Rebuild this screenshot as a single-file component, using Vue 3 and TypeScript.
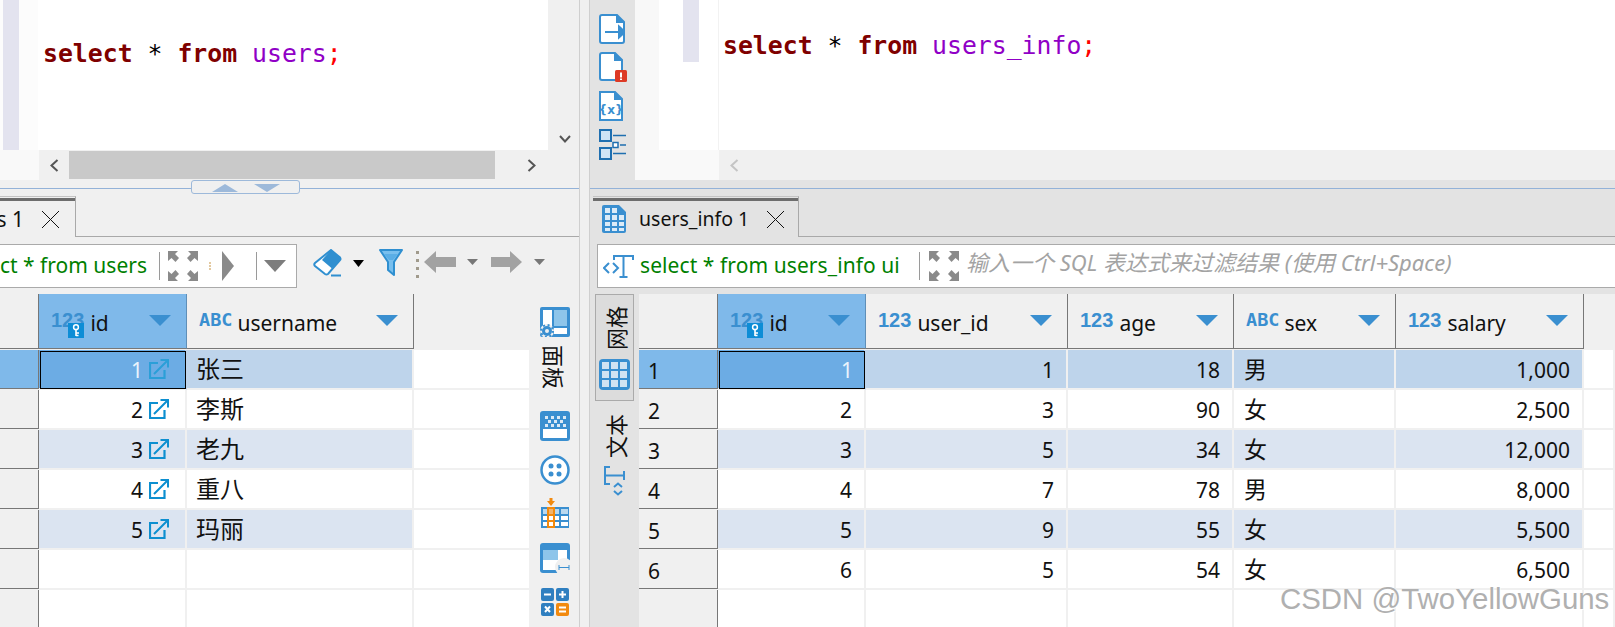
<script setup lang="ts">
interface Col { name: string; type: string; key?: boolean; sel?: boolean }
const leftCols: Col[] = [
  { name: 'id', type: '123', key: true, sel: true },
  { name: 'username', type: 'ABC' },
]
const rightCols: Col[] = [
  { name: 'id', type: '123', key: true, sel: true },
  { name: 'user_id', type: '123' },
  { name: 'age', type: '123' },
  { name: 'sex', type: 'ABC' },
  { name: 'salary', type: '123' },
]
const leftRows = [
  ['1', '张三'], ['2', '李斯'], ['3', '老九'], ['4', '重八'], ['5', '玛丽'], ['', ''], ['', ''],
]
const rightRows = [
  ['1', '1', '18', '男', '1,000'],
  ['2', '3', '90', '女', '2,500'],
  ['3', '5', '34', '女', '12,000'],
  ['4', '7', '78', '男', '8,000'],
  ['5', '9', '55', '女', '5,500'],
  ['6', '5', '54', '女', '6,500'],
  ['', '', '', '', ''],
]
const rowClass = (i: number) => (i === 0 ? 'r-sel' : i % 2 === 0 && i < 6 ? 'r-alt' : '')
</script>

<template>
  <div class="app">
    <svg class="defs" width="0" height="0">
      <symbol id="tri" viewBox="0 0 22 11"><path d="M0 0H22L11 11Z" fill="#3a8fd0" /></symbol>
      <symbol id="x" viewBox="0 0 17 17"><path d="M0 0L17 17M17 0L0 17" stroke="#111" stroke-width="1" fill="none" /></symbol>
      <symbol id="expand" viewBox="0 0 30 30">
        <g fill="#8a8a8a">
          <path d="M0 0H10L7 3L11 7L7.500 11L3.500 7L0 10Z" />
          <path d="M30 0H20L23 3L19 7L22.500 11L26.500 7L30 10Z" />
          <path d="M0 30H10L7 27L11 23L7.500 19L3.500 23L0 20Z" />
          <path d="M30 30H20L23 27L19 23L22.500 19L26.500 23L30 20Z" />
        </g>
      </symbol>
      <symbol id="key" viewBox="0 0 16 15">
        <rect width="16" height="15" fill="#0d8dd6" />
        <circle cx="8" cy="4.200" r="2.400" fill="none" stroke="#fff" stroke-width="1.500" />
        <path d="M8 6.500V13M8 10H11M8 12.500H10.500" stroke="#fff" stroke-width="1.600" fill="none" />
      </symbol>
      <symbol id="link" viewBox="0 0 20 20">
        <path d="M9 4H1V19H15.500V11" fill="none" stroke="currentColor" stroke-width="2.200" />
        <path d="M5 15L18 2M11.500 1H19V8.500" fill="none" stroke="currentColor" stroke-width="2" />
      </symbol>
    </svg>

    <!-- left pane -->
    <section class="pane left">
      <div class="editor">
        <div class="ed-top">
          <div class="gutter"><div class="ruler"></div></div>
          <div class="code code-l">
            <b class="kw">select</b> <span>*</span> <b class="kw">from</b> <span class="id">users</span><span class="semi">;</span>
          </div>
          <div class="vscroll">
            <svg width="12" height="8" viewBox="0 0 12 8"><path d="M1 1L6 6.500L11 1" fill="none" stroke="#555" stroke-width="2" /></svg>
          </div>
        </div>
        <div class="ed-bottom">
          <div class="corner corner-l"></div>
          <div class="hscroll">
            <div class="h-arrow"><svg width="9" height="13" viewBox="0 0 9 13"><path d="M7.500 1L1.500 6.500L7.500 12" fill="none" stroke="#555" stroke-width="2" /></svg></div>
            <div class="thumb"></div>
            <div class="h-end"><svg width="9" height="13" viewBox="0 0 9 13"><path d="M1.500 1L7.500 6.500L1.500 12" fill="none" stroke="#555" stroke-width="2" /></svg></div>
          </div>
        </div>
      </div>
      <div class="split">
        <div class="split-line"></div>
        <div class="sash">
          <svg width="26" height="9" viewBox="0 0 26 9"><path d="M13 0L26 8H0Z" fill="#9db9da" /></svg>
          <svg width="26" height="9" viewBox="0 0 26 9"><path d="M13 8L26 0H0Z" fill="#9db9da" /></svg>
        </div>
      </div>
      <div class="tabbar">
        <div class="tab tab-l">
          <div class="tab-bar"></div>
          <div class="tab-body">
            <div class="clip clip-tab"><span>users 1</span></div>
            <svg class="tab-x" width="17" height="17"><use href="#x" /></svg>
          </div>
        </div>
        <div class="tab-fill"></div>
      </div>
      <div class="filter-row">
        <div class="filter filter-l">
          <div class="clip clip-filter"><span class="sql">select * from users</span></div>
          <i class="vline vl-1"></i>
          <svg class="exp" width="30" height="30"><use href="#expand" /></svg>
          <span class="dots"></span>
          <svg width="12" height="30" viewBox="0 0 12 30"><path d="M0 0L12 15L0 30Z" fill="#8a8a8a" /></svg>
          <i class="vline vl-2"></i>
          <svg class="drop" width="22" height="12" viewBox="0 0 22 12"><path d="M0 0H22L11 12Z" fill="#7d7d7d" /></svg>
        </div>
        <div class="tools">
          <svg width="29" height="28" viewBox="0 0 29 28">
            <path d="M18 1L27 8.500Q28 10 27 11L15 25Q13.500 26 12 25L2 17Q0.500 15.500 2 14Z" fill="#fff" stroke="#2f8fd0" stroke-width="2" />
            <path d="M18 1L27 8.500Q28 10 27 11L19 19.500L9 11Z" fill="#2f8fd0" />
            <path d="M18 26.500H28" stroke="#2f8fd0" stroke-width="2" />
          </svg>
          <svg class="t1" width="11" height="7" viewBox="0 0 11 7"><path d="M0 0H11L5.500 7Z" fill="#000" /></svg>
          <svg class="t2" width="24" height="28" viewBox="0 0 24 28">
            <path d="M1 1H23L15 13V26L9 21V13Z" fill="#78bfee" stroke="#2f8fd0" stroke-width="2" stroke-linejoin="round" />
            <path d="M5 5H19L14 11H10Z" fill="#5aaee6" />
          </svg>
          <div class="grip"><i></i><i></i><i></i><i></i></div>
          <svg class="t3" width="32" height="22" viewBox="0 0 32 22"><path d="M0 11L12 0V6H32V16H12V22Z" fill="#a2a2a2" /></svg>
          <svg class="t4" width="11" height="6" viewBox="0 0 11 6"><path d="M0 0H11L5.500 6Z" fill="#777" /></svg>
          <svg class="t5" width="31" height="22" viewBox="0 0 31 22"><path d="M31 11L19 0V6H0V16H19V22Z" fill="#a2a2a2" /></svg>
          <svg class="t6" width="11" height="6" viewBox="0 0 11 6"><path d="M0 0H11L5.500 6Z" fill="#777" /></svg>
        </div>
      </div>
      <div class="data">
        <div class="grid grid-l">
          <div class="rh head"></div>
          <div v-for="c in leftCols" :key="c.name" class="hc" :class="{ 'hc-sel': c.sel }">
            <span class="type" :class="{ abc: c.type === 'ABC' }">{{ c.type }}</span>
            <svg v-if="c.key" class="keyb" width="16" height="15"><use href="#key" /></svg>
            <span class="hname">{{ c.name }}</span>
            <svg class="sort" width="22" height="11"><use href="#tri" /></svg>
          </div>
          <div class="hfill"></div>
          <template v-for="(r, i) in leftRows" :key="i">
            <div class="rh" :class="{ 'rh-sel': i === 0 }"></div>
            <div class="cell num" :class="[rowClass(i), { 'cur cur-l': i === 0 }]">
              <template v-if="r[0]">
                <span>{{ r[0] }}</span>
                <svg class="lnk" width="20" height="20"><use href="#link" /></svg>
              </template>
            </div>
            <div class="cell cjk" :class="rowClass(i)">{{ r[1] }}</div>
            <div class="cell"></div>
          </template>
        </div>
        <div class="sidebar">
          <svg width="30" height="30" viewBox="0 0 30 30">
            <path d="M2 0H28Q30 0 30 2V28Q30 30 28 30H2Q0 30 0 28V2Q0 0 2 0Z" fill="#3a8fd0" />
            <rect x="3" y="3" width="9" height="24" fill="#fff" />
            <rect x="14" y="3" width="13" height="16" fill="#8ec5ea" />
            <rect x="14" y="21" width="13" height="6" fill="#fff" />
            <circle cx="7" cy="24" r="7" fill="#f0f0f0" />
            <circle cx="7" cy="24" r="3.500" fill="none" stroke="#3a8fd0" stroke-width="3" />
            <circle cx="7" cy="24" r="6" fill="none" stroke="#3a8fd0" stroke-width="2" stroke-dasharray="2 2.700" />
          </svg>
          <span class="vtext vt-panel">面板</span>
          <svg class="s2" width="30" height="30" viewBox="0 0 30 30">
            <rect width="30" height="30" rx="3" fill="#3a8fd0" />
            <rect x="3" y="3" width="24" height="24" fill="#fff" />
            <rect x="3" y="3" width="24" height="15" fill="#3a8fd0" />
            <g fill="#dbe9f5">
              <rect x="5" y="5" width="3" height="3" /><rect x="11" y="5" width="3" height="3" /><rect x="17" y="5" width="3" height="3" /><rect x="23" y="5" width="3" height="3" />
              <rect x="8" y="9" width="3" height="3" /><rect x="14" y="9" width="3" height="3" /><rect x="20" y="9" width="3" height="3" />
              <rect x="5" y="13" width="3" height="3" /><rect x="11" y="13" width="3" height="3" /><rect x="17" y="13" width="3" height="3" /><rect x="23" y="13" width="3" height="3" />
            </g>
          </svg>
          <svg class="s3" width="30" height="30" viewBox="0 0 30 30">
            <circle cx="15" cy="15" r="13.500" fill="#fff" stroke="#3a8fd0" stroke-width="2.500" />
            <circle cx="11" cy="11" r="2.500" fill="#3a8fd0" /><circle cx="19" cy="11" r="2.500" fill="#3a8fd0" />
            <circle cx="11" cy="19" r="2.500" fill="#3a8fd0" /><circle cx="19" cy="19" r="2.500" fill="#3a8fd0" />
          </svg>
          <svg class="s4" width="30" height="31" viewBox="0 0 30 31">
            <rect x="1" y="9" width="28" height="21" fill="#3a8fd0" />
            <g fill="#fff">
              <rect x="3" y="11" width="7" height="5" fill="#b9d8ef" /><rect x="12" y="11" width="7" height="5" fill="#b9d8ef" /><rect x="21" y="11" width="7" height="5" fill="#b9d8ef" />
              <rect x="3" y="18" width="7" height="4" /><rect x="12" y="18" width="7" height="4" /><rect x="21" y="18" width="7" height="4" />
              <rect x="3" y="24" width="7" height="4" /><rect x="12" y="24" width="7" height="4" /><rect x="21" y="24" width="7" height="4" />
            </g>
            <rect x="7" y="9" width="8" height="21" fill="#f28a0f" />
            <rect x="9" y="11" width="4" height="5" fill="#f4b36a" /><rect x="9" y="18" width="4" height="4" fill="#fff" /><rect x="9" y="24" width="4" height="4" fill="#fff" />
            <path d="M9.500 0H12.500V3H15L11 8L7 3H9.500Z" fill="#f28a0f" />
          </svg>
          <svg class="s5" width="30" height="30" viewBox="0 0 30 30">
            <rect width="30" height="30" rx="3" fill="#3a8fd0" />
            <rect x="3" y="7" width="24" height="20" fill="#fff" />
            <rect x="3" y="7" width="15" height="10" fill="#8ec5ea" />
            <circle cx="24" cy="24" r="9" fill="#f0f0f0" />
            <path d="M19 22V27M19 24.500H29M29 22V27" stroke="#3a8fd0" stroke-width="1" fill="none" />
          </svg>
          <svg class="s6" width="28" height="28" viewBox="0 0 28 28">
            <rect width="13" height="13" rx="2" fill="#2f7fc0" />
            <rect x="15" width="13" height="13" rx="2" fill="#2f7fc0" />
            <rect y="15" width="13" height="13" rx="2" fill="#2f7fc0" />
            <rect x="15" y="15" width="13" height="13" rx="2" fill="#f28a0f" />
            <path d="M3 6.500H10M18 6.500H25M21.500 3V10M4 18.500L9 24M9 18.500L4 24M18 19.500H25M18 23.500H25" stroke="#fff" stroke-width="2" fill="none" />
          </svg>
        </div>
      </div>
    </section>

    <div class="gap"></div>

    <!-- right pane -->
    <section class="pane right">
      <div class="editor">
        <div class="ed-tools">
          <svg width="26" height="30" viewBox="0 0 26 30">
            <path d="M18 1H3Q1 1 1 3V27Q1 29 3 29H23Q25 29 25 27V8Z" fill="#fff" stroke="#3a8fd0" stroke-width="2" />
            <path d="M18 1V8H25" fill="#3a8fd0" stroke="#3a8fd0" stroke-width="2" />
            <path d="M6 18H20M20 12.500L26 18L20 23.500Z" stroke="#3a8fd0" fill="#3a8fd0" stroke-width="2" />
          </svg>
          <svg width="29" height="31" viewBox="0 0 29 31">
            <path d="M16 1H3Q1 1 1 3V26Q1 28 3 28H23V8Z" fill="#fff" stroke="#3a8fd0" stroke-width="2" />
            <path d="M16 1V8H23" fill="#3a8fd0" stroke="#3a8fd0" stroke-width="2" />
            <rect x="16" y="18" width="12" height="12" rx="1.500" fill="#dd3a26" />
            <path d="M22 20.500V25.500M22 26.500V28" stroke="#fff" stroke-width="2" />
          </svg>
          <svg width="24" height="30" viewBox="0 0 24 30">
            <path d="M16 1H1V29H23V8Z" fill="#fff" stroke="#3a8fd0" stroke-width="2" />
            <path d="M16 1V8H23" fill="#3a8fd0" stroke="#3a8fd0" stroke-width="2" />
            <text x="12" y="23" text-anchor="middle" class="svg-x">{x}</text>
          </svg>
          <svg width="27" height="31" viewBox="0 0 27 31">
            <rect x="1" y="1" width="11" height="11" fill="#cfe4f6" stroke="#1f6fb0" stroke-width="2" />
            <rect x="14" y="13.500" width="5" height="5" fill="#fff" stroke="#1f6fb0" stroke-width="1.500" />
            <rect x="1" y="19" width="11" height="11" fill="#cfe4f6" stroke="#1f6fb0" stroke-width="2" />
            <path d="M14 6.500H27M21 16H27M14 24.500H27" stroke="#1f6fb0" stroke-width="1.500" />
          </svg>
        </div>
        <div class="ed-main">
          <div class="ed-top ed-top-r">
            <div class="gutter-r"><div class="ruler ruler-r"></div></div>
            <div class="code code-r">
              <b class="kw">select</b> <span>*</span> <b class="kw">from</b> <span class="id">users_info</span><span class="semi">;</span>
            </div>
          </div>
          <div class="ed-bottom">
            <div class="corner corner-r"></div>
            <div class="hscroll">
              <div class="h-arrow h-arrow-r"><svg width="9" height="13" viewBox="0 0 9 13"><path d="M7.500 1L1.500 6.500L7.500 12" fill="none" stroke="#c4c4c4" stroke-width="2" /></svg></div>
            </div>
          </div>
        </div>
      </div>
      <div class="split"><div class="split-line"></div></div>
      <div class="tabbar">
        <div class="tab tab-r">
          <div class="tab-bar"></div>
          <div class="tab-body">
            <svg class="tab-ic" width="24" height="28" viewBox="0 0 24 28">
              <path d="M2 0H17L24 7V26Q24 28 22 28H2Q0 28 0 26V2Q0 0 2 0Z" fill="#3a8fd0" />
              <g fill="#dcebf7">
                <rect x="3" y="3" width="5" height="5" /><rect x="10" y="3" width="5" height="5" />
                <rect x="3" y="10" width="5" height="5" /><rect x="10" y="10" width="5" height="5" /><rect x="17" y="10" width="5" height="5" />
                <rect x="3" y="17" width="5" height="4" /><rect x="10" y="17" width="5" height="4" /><rect x="17" y="17" width="5" height="4" />
                <rect x="3" y="23" width="5" height="3" /><rect x="10" y="23" width="5" height="3" /><rect x="17" y="23" width="5" height="3" />
              </g>
            </svg>
            <span class="tab-name">users_info 1</span>
            <svg class="tab-x" width="17" height="17"><use href="#x" /></svg>
          </div>
        </div>
        <div class="tab-fill"></div>
      </div>
      <div class="filter-row filter-row-r">
        <div class="filter filter-r">
          <svg class="t-ic" width="31" height="24" viewBox="0 0 31 24">
            <path d="M6 9L1 14L6 19M10 9L15 14L10 19" fill="none" stroke="#3a8fd0" stroke-width="2" />
            <path d="M11 6V2H30V6M20.500 2V23M16.500 23H24.500" fill="none" stroke="#3a8fd0" stroke-width="2" />
          </svg>
          <span class="sql sql-r">select * from users_info ui</span>
          <i class="vline vl-3"></i>
          <svg class="exp" width="30" height="30"><use href="#expand" /></svg>
          <span class="ph">输入一个 SQL 表达式来过滤结果 (使用 Ctrl+Space)</span>
        </div>
      </div>
      <div class="data">
        <div class="sidetabs">
          <div class="stab-on">
            <span class="vtext vt-rev">网格</span>
            <svg class="s-grid" width="31" height="31" viewBox="0 0 31 31">
              <rect width="31" height="31" rx="4" fill="#3a8fd0" />
              <g fill="#d2e3f2">
                <rect x="3" y="3" width="7" height="7" /><rect x="12" y="3" width="7" height="7" /><rect x="21" y="3" width="7" height="7" />
                <rect x="3" y="12" width="7" height="7" /><rect x="12" y="12" width="7" height="7" /><rect x="21" y="12" width="7" height="7" />
                <rect x="3" y="21" width="7" height="7" /><rect x="12" y="21" width="7" height="7" /><rect x="21" y="21" width="7" height="7" />
              </g>
            </svg>
          </div>
          <span class="vtext vt-rev vt-text">文本</span>
          <svg class="s-text" width="21" height="30" viewBox="0 0 21 30">
            <path d="M6 1H1V18H6M1 9.500H20M20 5V14" fill="none" stroke="#3a8fd0" stroke-width="2" />
            <path d="M10 21L14 17.500L18 21M10 25L14 28.500L18 25" fill="none" stroke="#3a8fd0" stroke-width="2" />
          </svg>
        </div>
        <div class="grid grid-r">
          <div class="rh head"></div>
          <div v-for="c in rightCols" :key="c.name" class="hc" :class="{ 'hc-sel': c.sel }">
            <span class="type" :class="{ abc: c.type === 'ABC' }">{{ c.type }}</span>
            <svg v-if="c.key" class="keyb" width="16" height="15"><use href="#key" /></svg>
            <span class="hname">{{ c.name }}</span>
            <svg class="sort" width="22" height="11"><use href="#tri" /></svg>
          </div>
          <div class="hfill"></div>
          <template v-for="(r, i) in rightRows" :key="i">
            <div class="rh rh-num" :class="{ 'rh-sel': i === 0 }">{{ r[0] }}</div>
            <div class="cell num" :class="[rowClass(i), { 'cur cur-r': i === 0 }]">{{ r[0] }}</div>
            <div class="cell num" :class="rowClass(i)">{{ r[1] }}</div>
            <div class="cell num" :class="rowClass(i)">{{ r[2] }}</div>
            <div class="cell cjk" :class="rowClass(i)">{{ r[3] }}</div>
            <div class="cell num" :class="rowClass(i)">{{ r[4] }}</div>
            <div class="cell"></div>
          </template>
        </div>
      </div>
    </section>

    <div class="watermark">CSDN @TwoYellowGuns</div>
  </div>
</template>

<style scoped>
.app {
  position: relative;
  display: flex;
  width: 1615px;
  height: 627px;
  overflow: hidden;
  background: #f0f0f0;
  color: #111;
  font-family: "Noto Sans", "Noto Sans CJK SC", sans-serif;
  font-size: 21px;
}
.defs { position: absolute; }
.pane { display: flex; flex-direction: column; height: 627px; min-width: 0; }
.left { width: 579px; flex: none; background: #f0f0f0; }
.gap { width: 11px; flex: none; background: #f0f0f0; border-left: 1px solid #cfcfcf; border-right: 1px solid #cfcfcf; box-sizing: border-box; }
.right { flex: 1; background: #e3e3e3; }

.editor { height: 180px; flex: none; display: flex; flex-direction: column; }
.right .editor { flex-direction: row; }
.ed-top { height: 150px; display: flex; flex: none; }
.gutter { width: 38px; background: #fcfcfc; padding-left: 3px; box-sizing: border-box; }
.ruler { width: 16px; height: 150px; background: #e3e3ef; }
.ruler-r { height: 62px; }
.code {
  font-family: "DejaVu Sans Mono", monospace;
  font-size: 24.8px;
  line-height: 30px;
  background: #fff;
  white-space: pre;
  color: #000;
  box-sizing: border-box;
}
.code-l { width: 510px; padding: 39px 0 0 5px; }
.code-r { flex: 1; padding: 31px 0 0 4px; border-left: 1px solid #f2f2f2; }
.kw { color: #7f0000; font-weight: 700; }
.id { color: #9000c6; }
.semi { color: #f00; }
.vscroll { flex: 1; display: flex; align-items: flex-end; justify-content: center; padding: 0 0 7px 2px; background: #f0f0f0; }
.ed-bottom { height: 30px; display: flex; flex: none; }
.corner { background: #f9f9f9; }
.corner-l { width: 39px; }
.hscroll { flex: 1; display: flex; align-items: stretch; padding: 1px 0; background: #f0f0f0; }
.h-arrow { width: 30px; display: flex; align-items: center; justify-content: center; }
.thumb { width: 426px; background: #c9c9c9; }
.h-end { flex: 1; display: flex; align-items: center; padding-left: 32px; }
.ed-tools { width: 45px; flex: none; background: #e3e3e3; display: flex; flex-direction: column; align-items: flex-start; gap: 8px; padding: 14px 0 0 9px; box-sizing: border-box; }
.ed-main { flex: 1; display: flex; flex-direction: column; min-width: 0; }
.ed-top-r { background: #fff; }
.gutter-r { width: 83px; flex: none; padding-left: 48px; box-sizing: border-box; background: linear-gradient(90deg, #f8f8f8 24px, #fff 24px, #fff 83px); }
.corner-r { width: 84px; }
.h-arrow-r { width: 30px; }

.split { position: relative; height: 16px; flex: none; padding-top: 8px; box-sizing: border-box; }
.split-line { height: 1px; background: #93b2d8; }
.sash {
  position: absolute;
  left: 191px;
  top: 0;
  width: 109px;
  height: 14px;
  box-sizing: border-box;
  background: #f0f0f0;
  border: 1px solid #9db9da;
  border-radius: 3px;
  display: flex;
  justify-content: center;
  gap: 16px;
  padding-top: 3px;
}

.tabbar { display: flex; height: 41px; flex: none; }
.tab { box-sizing: border-box; height: 41px; border-right: 1px solid #a9a9a9; border-top: 1px solid #c4c4c4; flex: none; }
.tab-l { width: 76px; }
.tab-r { width: 206px; margin-left: 3px; }
.tab-bar { height: 3px; margin-top: 1px; background: #6d6d6d; }
.tab-body { display: flex; align-items: center; height: 36px; }
.tab-fill { flex: 1; border-bottom: 1px solid #a9a9a9; }
.clip { display: flex; justify-content: flex-end; overflow: hidden; white-space: nowrap; flex: none; }
.clip-tab { width: 24px; }
.tab-l .tab-x { margin-left: 18px; }
.tab-ic { margin-left: 9px; flex: none; }
.tab-name { margin-left: 13px; white-space: nowrap; width: 128px; flex: none; font-size: 19.5px; margin-top: -2px; }
.tab-r .tab-x { flex: none; }

.filter-row { display: flex; height: 44px; margin-top: 7px; flex: none; align-items: stretch; }
.filter { background: #fff; border: 1px solid #aaa; box-sizing: border-box; display: flex; align-items: center; }
.filter-l { width: 297px; border-left: none; }
.filter-r { flex: 1; margin-left: 7px; border-right: none; }
.clip-filter { width: 147px; }
.sql { color: #008000; white-space: nowrap; margin-top: -2px; }
.vline { display: block; width: 1px; height: 28px; background: #9a9a9a; flex: none; }
.vl-1 { margin-left: 12px; }
.filter-l .exp { margin-left: 8px; flex: none; }
.dots { width: 2px; height: 8px; margin: 0 11px 0 11px; border-left: 2px dotted #e3c9a0; box-sizing: border-box; flex: none; }
.vl-2 { margin-left: 22px; }
.drop { margin-left: 7px; flex: none; }
.tools { display: flex; align-items: center; padding-left: 16px; margin-top: -6px; }
.tools svg { flex: none; }
.t1 { margin-left: 11px; }
.t2 { margin-left: 15px; }
.grip { display: flex; flex-direction: column; gap: 5px; margin-left: 13px; margin-top: 3px; }
.grip i { display: block; width: 3px; height: 3px; background: #a09a8c; }
.t3 { margin-left: 5px; margin-top: -3px; }
.t4 { margin-left: 11px; margin-top: -3px; }
.t5 { margin-left: 13px; margin-top: -3px; }
.t6 { margin-left: 12px; margin-top: -3px; }
.t-ic { margin-left: 5px; flex: none; }
.sql-r { margin-left: 6px; width: 259px; flex: none; letter-spacing: 0.08px; }
.vl-3 { margin-left: 20px; }
.filter-r .exp { margin-left: 9px; flex: none; }
.ph { margin-left: 7px; font-size: 22px; font-style: italic; color: #a3a3a3; white-space: nowrap; margin-top: -10px; }

.data { display: flex; flex: 1; margin-top: 6px; min-height: 0; }
.grid { display: grid; flex: 1; grid-auto-rows: 40px; grid-template-rows: 56px; overflow: hidden; background: #f0f0f0; min-width: 0; }
.grid-l { grid-template-columns: 39px 148px 227px 117px; }
.grid-r { grid-template-columns: 79px 148px 202px 166px 162px 188px 1fr; }

.rh { box-sizing: border-box; background: #f0f0f0; border-right: 1px solid #777; border-bottom: 1px solid #777; margin-bottom: 1px; }
.rh-sel { background: #7fb9ea; }
.rh-num { padding: 4px 0 0 9px; line-height: 34px; }
.hc {
  box-sizing: border-box;
  display: flex;
  align-items: center;
  position: relative;
  padding: 4px 15px 0 12px;
  margin-bottom: 1px;
  background: #f0f0f0;
  border-right: 1px solid #777;
  border-bottom: 1px solid #777;
  white-space: nowrap;
}
.hc-sel { background: #7fb9ea; border-right-color: #5f8fb8; padding-left: 12px; }
.type { font-family: "Liberation Sans", sans-serif; font-weight: 700; font-size: 20px; color: #3a8fd0; line-height: 20px; margin-top: -6px; flex: none; }
.type.abc { font-family: "DejaVu Sans Mono", monospace; font-size: 18.5px; }
.keyb { position: absolute; left: 29px; top: 29px; }
.hname { margin-left: 6px; line-height: 28px; }
.type.abc + .hname { margin-left: 5px; }
.sort { margin-left: auto; margin-top: -6px; flex: none; }
.hfill { background: #f0f0f0; }

.cell {
  box-sizing: border-box;
  background: #fff;
  border-right: 2px solid #f0f0f0;
  border-bottom: 2px solid #f0f0f0;
  display: flex;
  align-items: center;
  min-width: 0;
  line-height: 36px;
  white-space: nowrap;
}
.r-sel { background: #bed4eb; }
.r-alt { background: #dbe4f1; }
.num { justify-content: flex-end; padding-right: 12px; padding-top: 2px; }
.cjk { font-family: "Noto Sans CJK SC", sans-serif; font-size: 23px; padding-left: 10px; padding-bottom: 2px; }
.grid-l .cjk { font-size: 24px; padding-left: 9px; }
.lnk { margin-left: 6px; color: #0d8fd0; flex: none; margin-top: -2px; margin-right: 4px; }
.grid-r .cur { padding-right: 11px; }
.cur { background: #6cace4; outline: 1px solid #000; outline-offset: -2px; color: #e9f3fc; border-right: 2px solid #bed4eb; }
.cur .lnk { color: #2b9fd8; }

.sidebar {
  width: 48px;
  flex: none;
  background: #f0f0f0;
  display: flex;
  flex-direction: column;
  align-items: center;
  padding-top: 13px;
  box-sizing: border-box;
}
.sidebar svg { flex: none; }
.vtext { writing-mode: vertical-rl; text-orientation: sideways; font-family: "Noto Sans CJK SC", sans-serif; font-size: 22px; line-height: 24px; color: #111; flex: none; white-space: nowrap; }
.vt-panel { margin-top: 8px; }
.vt-rev { transform: rotate(180deg); }
.s2 { margin-top: 22px; }
.s3 { margin-top: 14px; }
.s4 { margin-top: 13px; }
.s5 { margin-top: 14px; }
.s6 { margin-top: 15px; }

.sidetabs { width: 49px; flex: none; display: flex; flex-direction: column; align-items: center; box-sizing: border-box; background: #e3e3e3; }
.stab-on { box-sizing: border-box; width: 39px; height: 107px; background: #dcdcdc; border: 1px solid #aaa; display: flex; flex-direction: column; align-items: center; padding-top: 11px; }
.s-grid { margin-top: 9px; flex: none; }
.vt-text { margin-top: 13px; }
.s-text { margin-top: 8px; flex: none; }
.svg-x { font-family: "DejaVu Sans", sans-serif; font-size: 12px; font-weight: 700; fill: #3a8fd0; }

.watermark {
  position: absolute;
  left: 1280px;
  top: 585px;
  font-family: "Liberation Sans", sans-serif;
  font-size: 29.4px;
  line-height: 28px;
  color: #b0b0b0;
  white-space: nowrap;
  text-shadow: 1px 1px 0 rgba(255, 255, 255, 0.8);
}
</style>
